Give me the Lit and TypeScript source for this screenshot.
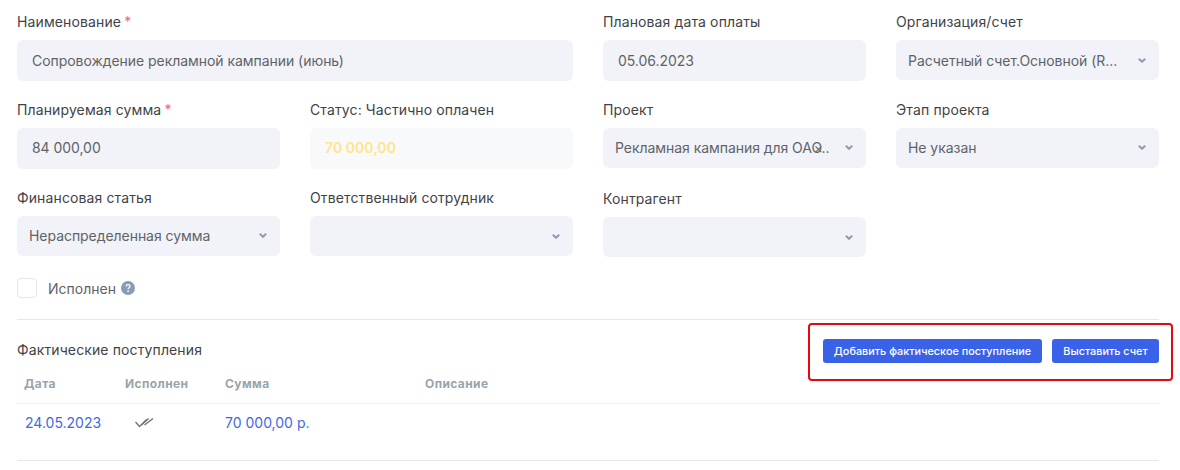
import { LitElement, html, css, nothing } from "lit";
import { customElement } from "lit/decorators.js";

const chevron = html`<svg class="chev" width="8" height="5" viewBox="0 0 8 5"><path d="M.8.8 4 3.8 7.2.8" fill="none" stroke="#8f9bae" stroke-width="2"/></svg>`;

@customElement("app-root")
export class AppRoot extends LitElement {
  static styles = css`
    :host { display: block; width: 1180px; height: 470px; position: relative; background: #fff; font-family: Inter, "Liberation Sans", sans-serif; color: #3b3f45; overflow: hidden; box-sizing: border-box; }
    .page { padding: 13px 21px 0 17px; }
    .grid { display: grid; grid-template-columns: repeat(4, 263px); column-gap: 30px; row-gap: 20px; align-items: start; }
    .span2 { grid-column: span 2; }
    .label { font-size: 14px; line-height: 18px; margin-bottom: 9px; color: #3f4347; white-space: nowrap; letter-spacing: 0.12px; }
    .label b { font-weight: 400; color: #f7607a; margin-left: -1px; }
    .low { padding-top: 1px; }
    .box { height: 41px; border-radius: 6px; background: #f2f3f8; display: flex; align-items: center; padding: 0 15px; font-size: 14px; color: #5f6368; box-sizing: border-box; white-space: nowrap; letter-spacing: -0.05px; }
    .box.select { height: 40px; padding: 0 13px 0 12px; justify-content: space-between; }
    .up { padding-bottom: 2px !important; }
    .box .text { overflow: hidden; }
    .chev { flex: none; margin-top: 1px; }
    .paid { background: #f8f9fb; color: #fde68a; font-weight: 600; letter-spacing: 0.05px; }
    .overlap { position: relative; display: inline-flex; width: 219px; overflow: hidden; }
    .clear { position: absolute; right: 11px; top: 1px; font-size: 14px; color: #6b6e72; line-height: 16px; }
    .check { display: flex; align-items: center; height: 20px; margin-top: 21px; font-size: 14px; color: #5f6368; }
    .cb { width: 20px; height: 20px; box-sizing: border-box; border: 1px solid #e4e6ee; border-radius: 4px; background: #fff; margin-right: 11px; }
    .help { margin-left: 5px; }
    hr { border: 0; height: 1px; background: #e6e8ee; margin: 0; }
    .top { margin-top: 21px; }
    .head { display: flex; justify-content: space-between; align-items: center; height: 45px; margin-top: 8px; }
    .title { font-size: 14px; line-height: 18px; color: #3f4347; letter-spacing: 0.12px; margin-top: -2px; }
    .btns { display: flex; gap: 10px; }
    button { height: 24px; border: 0; border-radius: 3px; background: #3a62e8; color: #fff; font: 500 10.85px Inter, "Liberation Sans", sans-serif; padding: 0; white-space: nowrap; }
    .b1 { width: 219px; }
    .b2 { width: 107px; }
    .row { display: grid; grid-template-columns: 100px 100px 200px 1fr; padding: 0 8px; align-items: center; }
    .th { height: 31px; padding-bottom: 9px; box-sizing: border-box; border-bottom: 1px solid #eff0f4; font: 700 12px Inter, "Liberation Sans", sans-serif; letter-spacing: 0.4px; color: #98a5aa; }
    .th span:first-child { margin-left: -1px; }
    .td { height: 36px; font-size: 14px; color: #3f68e4; }
    .tick { padding-left: 10px; display: flex; }
    .bottom { margin-top: 20px; }
    .note { position: absolute; left: 808px; top: 323px; width: 365px; height: 58px; box-sizing: border-box; border: 2px solid #e8060f; border-radius: 4px; pointer-events: none; }
  `;

  private field(label: string, value: unknown, cls = "", req = false, boxCls = "") {
    return html`<div class=${cls}>
      <div class="label">${label}${req ? html` <b>*</b>` : nothing}</div>
      <div class="box ${boxCls}">${value}</div>
    </div>`;
  }

  private select(label: string, value: unknown, cls = "", boxCls = "") {
    return html`<div class=${cls}>
      <div class="label">${label}</div>
      <div class="box select ${boxCls}"><span class="text">${value}</span>${chevron}</div>
    </div>`;
  }

  render() {
    return html`
      <div class="page">
        <div class="grid">
          ${this.field("Наименование", "Сопровождение рекламной кампании (июнь)", "span2", true)}
          ${this.field("Плановая дата оплаты", "05.06.2023")}
          ${this.select("Организация/счет", "Расчетный счет.Основной (R...")}
          ${this.field("Планируемая сумма", "84 000,00", "", true, "up")}
          ${this.field("Статус: Частично оплачен", "70 000,00", "", false, "paid up")}
          ${this.select("Проект", html`<span class="overlap">Рекламная кампания для ОАО..<span class="clear">×</span></span>`, "", "up")}
          ${this.select("Этап проекта", "Не указан", "", "up")}
          ${this.select("Финансовая статья", "Нераспределенная сумма", "", "up")}
          ${this.select("Ответственный сотрудник", "")}
          ${this.select("Контрагент", "", "low")}
        </div>
        <div class="check">
          <div class="cb"></div>Исполнен
          <svg class="help" width="14" height="14" viewBox="0 0 14 14"><circle cx="7" cy="7" r="7" fill="#8a9bb8"/><path d="M5.1 5.4c.1-1.2 1-1.8 2-1.8s1.9.7 1.9 1.6c0 1.4-1.9 1.5-1.9 2.9" fill="none" stroke="#fff" stroke-width="1.3"/><circle cx="7.1" cy="10.2" r=".9" fill="#fff"/></svg>
        </div>
        <hr class="top" />
        <div class="head">
          <div class="title">Фактические поступления</div>
          <div class="btns"><button class="b1">Добавить фактическое поступление</button><button class="b2">Выставить счет</button></div>
        </div>
        <div class="row th"><span>Дата</span><span>Исполнен</span><span>Сумма</span><span>Описание</span></div>
        <div class="row td">
          <span>24.05.2023</span>
          <span class="tick"><svg width="19" height="11" viewBox="0 0 19 11"><path d="M.5 5 4.5 9.5 11.5 2.5M6.5 8 13.5 1.5M9.5 8 18 1.5" fill="none" stroke="#6c6f73" stroke-width="1.3"/></svg></span>
          <span>70 000,00 р.</span><span></span>
        </div>
        <hr class="bottom" />
      </div>
      <div class="note"></div>
    `;
  }
}
